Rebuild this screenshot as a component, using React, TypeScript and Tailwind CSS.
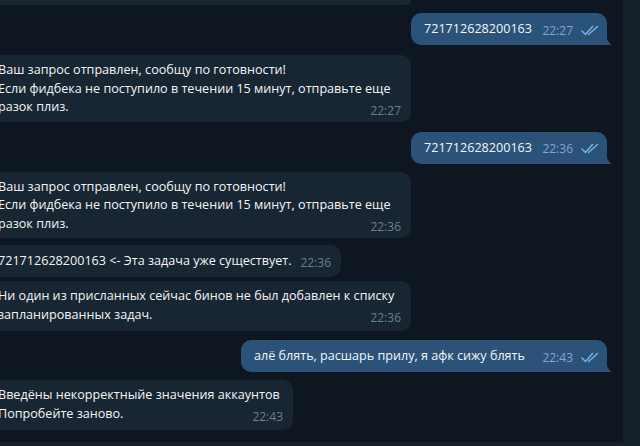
import React from "react";

const font = { fontFamily: '"Open Sans", "Noto Sans", sans-serif' };

function Checks() {
  return (
    <svg width="19" height="11" viewBox="0 0 19 11" className="shrink-0">
      <path d="M1 6 L4.5 9.5 L11.5 1.5" fill="none" stroke="#72b2ea" strokeWidth="1.5" strokeLinecap="round" strokeLinejoin="round" />
      <path d="M7.5 9.5 L16.5 1.5" fill="none" stroke="#72b2ea" strokeWidth="1.5" strokeLinecap="round" strokeLinejoin="round" />
    </svg>
  );
}

function OutTail() {
  return (
    <svg width="8" height="12" viewBox="0 0 8 12" className="absolute right-[-6px] bottom-0">
      <path d="M0 0 L0 12 L7 12 C4 10 1 6 0 0 Z" fill="#2b5278" />
    </svg>
  );
}

function Outgoing({ text, time, width, className = "" }: { text: string; time: string; width: string; className?: string }) {
  return (
    <div className={`self-end mr-[16px] relative ${className}`}>
      <div className={`${width} bg-[#2b5278] rounded-[10px] rounded-br-none pl-[13px] pr-[7px] h-[32px] flex items-center`}>
        <span className="flex-1 text-[12.6px] text-[#f5f5f5] leading-[18px] whitespace-nowrap">{text}</span>
        <span className="text-[12px] text-[#7da8d3] mt-[3px] ml-[10px]">{time}</span>
        <span className="ml-[8px] mt-[2px]"><Checks /></span>
      </div>
      <OutTail />
    </div>
  );
}

function Incoming({
  lines,
  time,
  width,
  className = "",
  single = false,
  pb = "pb-[5px]",
}: {
  lines: string[];
  time: string;
  width: string;
  className?: string;
  single?: boolean;
  pb?: string;
}) {
  if (single) {
    return (
      <div className={`self-start ${className}`}>
        <div className={`${width} bg-[#182533] rounded-[10px] pl-[14px] pr-[10px] h-[32px] flex items-center`}>
          <span className="flex-1 text-[12.6px] text-[#f5f5f5] leading-[18px] whitespace-nowrap">{lines[0]}</span>
          <span className="text-[12px] text-[#6d7f8f] mt-[4px]">{time}</span>
        </div>
      </div>
    );
  }
  return (
    <div className={`self-start ${className}`}>
      <div className={`${width} bg-[#182533] rounded-[10px] pl-[14px] pr-[10px] pt-[6px] ${pb} grid`}>
        <div className="col-start-1 row-start-1 text-[12.6px] text-[#f5f5f5] leading-[18.5px] whitespace-nowrap">
          {lines.map((l, i) => (
            <div key={i}>{l}</div>
          ))}
        </div>
        <span className="col-start-1 row-start-1 self-end justify-self-end text-[12px] leading-[16px] text-[#6d7f8f] mb-[-2px]">{time}</span>
      </div>
    </div>
  );
}

export default function App() {
  return (
    <div className="w-[640px] h-[446px] overflow-hidden flex bg-[#0e1621]" style={font}>
      <div className="flex-1 flex flex-col overflow-hidden">
        <div className="flex-1 flex flex-col ml-[-16px] overflow-hidden">
          <div className="self-start w-[427px] h-[5px] bg-[#182533] rounded-b-[10px] shrink-0" />
          <Outgoing text="721712628200163" time="22:27" width="w-[196px]" className="mt-[8px]" />
          <Incoming
            className="mt-[10px]"
            width="w-[427px]"
            time="22:27"
            lines={[
              "Ваш запрос отправлен, сообщу по готовности!",
              "Если фидбека не поступило в течении 15 минут, отправьте еще",
              "разок плиз.",
            ]}
          />
          <Outgoing text="721712628200163" time="22:36" width="w-[196px]" className="mt-[10px]" />
          <Incoming
            className="mt-[8px]"
            width="w-[427px]"
            time="22:36"
            lines={[
              "Ваш запрос отправлен, сообщу по готовности!",
              "Если фидбека не поступило в течении 15 минут, отправьте еще",
              "разок плиз.",
            ]}
          />
          <Incoming
            className="mt-[7px]"
            single
            width="w-[357px]"
            time="22:36"
            lines={["721712628200163 <- Эта задача уже существует."]}
          />
          <Incoming
            className="mt-[4px]"
            width="w-[427px]"
            time="22:36"
            pb="pb-[7px]"
            lines={[
              "Ни один из присланных сейчас бинов не был добавлен к списку",
              "запланированных задач.",
            ]}
          />
          <Outgoing text="алё блять, расшарь прилу, я афк сижу блять" time="22:43" width="w-[366px]" className="mt-[9px]" />
          <Incoming
            className="mt-[8px]"
            width="w-[309px]"
            time="22:43"
            pb="pb-[7px]"
            lines={["Введёны некорректныйе значения аккаунтов", "Попробейте заново."]}
          />
        </div>
        <div className="h-[5px] shrink-0 bg-[#17212b] border-t border-[#0a121b]" />
      </div>
      <div className="w-[17px] shrink-0 bg-[#17212b]" />
    </div>
  );
}
